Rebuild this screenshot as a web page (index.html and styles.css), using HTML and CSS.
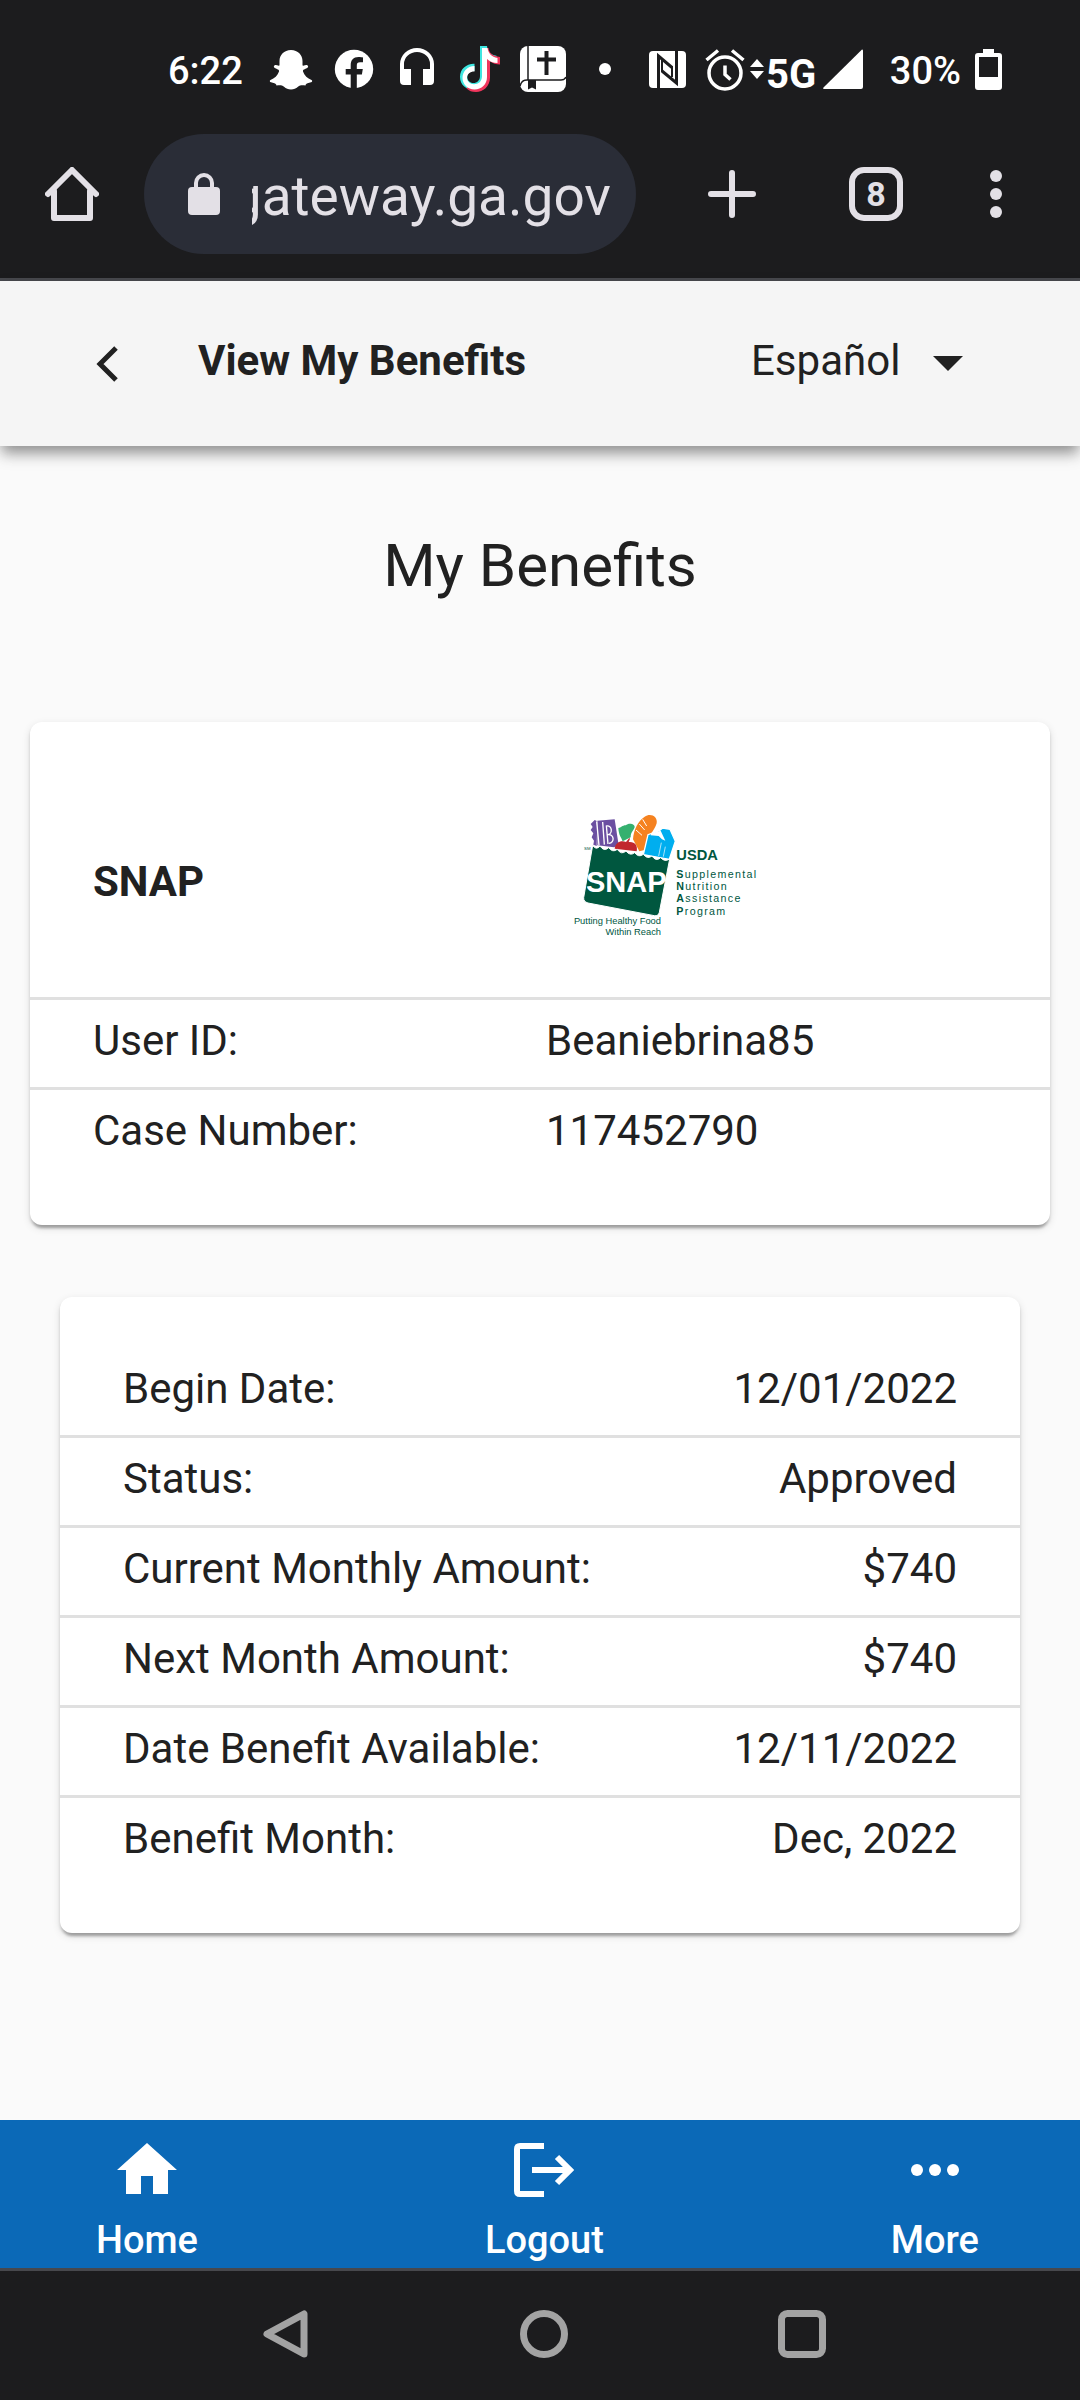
FILE: index.html
```html
<!DOCTYPE html>
<html lang="en">
<head>
  <meta charset="UTF-8">
  <meta name="viewport" content="width=device-width, initial-scale=1.0">
  <title>View My Benefits</title>
  <link rel="stylesheet" href="styles.css">
</head>
<body>

  <!-- status bar -->
  <div class="status">
    <span class="time">6:22</span>
    <div class="notices">
      <svg class="ico" viewBox="0 0 46 46"><path fill="#fff" d="M23 4c7 0 11.500 5 11.500 11v4.500c1.500.6 3-.8 4.700-.3 1.300.5 1.300 2-.2 2.900-2 1.300-4.500 1.500-4 3.500 1.300 4 4.500 7 8.500 8.300 1.200.6.700 1.900-.5 2.400-2.300 1-4.800.6-5.500 3.200-3.300-.4-5.500-.4-7.500 1.200-2.200 1.700-4 2.800-7 2.800s-4.800-1.100-7-2.800c-2-1.600-4.200-1.600-7.500-1.200-.7-2.600-3.200-2.200-5.500-3.200-1.200-.5-1.700-1.800-.5-2.400 4-1.300 7.200-4.300 8.500-8.300.5-2-2-2.200-4-3.500-1.500-.9-1.500-2.400-.2-2.900 1.700-.5 3.200.9 4.700.3V15c0-6 4.500-11 11.500-11z"/></svg>
      <svg class="ico" viewBox="0 0 46 46"><circle cx="23" cy="23" r="19.200" fill="#fff"/><path fill="#1c1c1e" d="M19.700 43V28.500h-5v-5.600h5v-3.500c0-5.300 2.700-8.300 7.800-8.300 2 0 3.500.2 4.500.4v4.800h-3c-2.400 0-3.200 1.200-3.200 3.200v3.400h6l-.9 5.600h-5.100V43z"/></svg>
      <svg class="ico" viewBox="0 0 46 46"><path fill="#fff" d="M6 18a17 16 0 0 1 34 0v17a4 4 0 0 1-4 4h-7V23h7v-5a13 12 0 0 0-26 0v5h7v16h-7a4 4 0 0 1-4-4z"/></svg>
      <svg class="ico" viewBox="0 0 46 46"><path fill="#3ee6e0" d="M23 0h7c.5 5.500 4 9 9.500 9.700v6.800c-3.700 0-6.800-1-9.500-3v17c0 8-6 13.500-13.200 13.500C9 44 3 38.500 3 31c0-8 6.500-13.500 14.500-13.200v7.300C13.500 24.500 10.300 27 10.300 31c0 3.500 2.700 6 6 6 4 0 6.700-2.700 6.700-7z"/><path fill="#f0355c" d="M26 2h5.500c.5 5.500 4.500 8 11.500 9v7.500c-4 0-7-1-10-3v16C33 40.500 26 46 19 46c-4 0-7-1-9.500-3.500L13 38.500c1.500.7 3 1 5 1 4.500 0 8-3.500 8-8z"/><path fill="#fff" d="M25 2h5.500c1 5.500 4 9 10 10v5c-4.500 0-7.500-1.500-10.500-4v18c0 7.500-5.500 12.500-12.500 12.500S5.500 38 5.500 32s4.500-12 12-12v5.500c-4.500 0-7.500 2.500-7.500 6.300 0 3.400 3 6.400 7 6.400 4.500 0 8-3 8-8z"/></svg>
      <svg class="ico" viewBox="0 0 46 46"><rect width="46" height="46" rx="8" fill="#fff"/><g fill="none" stroke="#1c1c1e" stroke-width="1.500"><path d="M8 0v34M0 40c1-4 3-6 7-6h34c3 0 4-1 5-3"/></g><path fill="#1c1c1e" d="M24.500 5h4v6.500H36v4h-7.500V29h-4V15.500H17v-4h7.500zM8 34h8v9.500l-4-2-4 2z"/></svg>
      <svg class="ico" viewBox="0 0 46 46"><circle cx="22" cy="23" r="6" fill="#fff"/></svg>
    </div>
    <svg class="ico nfc" viewBox="0 0 46 46"><rect x="3" y="5" width="37" height="37" rx="4" fill="#fff"/><g fill="none" stroke="#1c1c1e"><path stroke-width="3" d="M12.500 42V10L26 21.500M30.500 5v32L16 25"/><path stroke-width="2" d="M16 26V14M26 20v11"/></g></svg>
    <svg class="ico alarm" viewBox="0 0 46 46"><g fill="none" stroke="#fff" stroke-width="3.500"><circle cx="23" cy="27" r="16"/><path d="M4.500 14 16 4.500M41.500 14 30 4.500M23 19.500v9l5.500 5"/></g></svg>
    <svg class="updown" viewBox="0 0 14 20"><path fill="#fff" d="M7 0l7 8H0zM7 20l7-8H0z"/></svg>
    <span class="network">5G</span>
    <svg class="signal" viewBox="0 0 40 40"><path fill="#fff" d="M39 .5q1 0 1 1V38q0 2-2 2H1q-1.500-.5-.5-1.500z"/></svg>
    <span class="percent">30%</span>
    <svg class="battery" viewBox="0 0 27 41"><path fill="#fff" fill-rule="evenodd" d="M8 0h11v4h5a3 3 0 0 1 3 3v31a3 3 0 0 1-3 3H3a3 3 0 0 1-3-3V7a3 3 0 0 1 3-3h5zM4 8v20h19V8z"/></svg>
  </div>

  <!-- browser bar -->
  <div class="browser">
    <button class="browser-home" aria-label="Home page">
      <svg width="54" height="54" viewBox="0 0 54 54" fill="none" stroke="#e3e0e6" stroke-width="6" stroke-linecap="round" stroke-linejoin="round"><path d="M3 27 27 3l24 24"/><path d="M9 24v27h36V24"/></svg>
    </button>
    <label class="address">
      <svg width="32" height="42" viewBox="0 0 32 42"><rect y="14" width="32" height="28" rx="4" fill="#e3e0e6"/><path fill="none" stroke="#e3e0e6" stroke-width="4" d="M8 16v-6a8 8 0 0 1 16 0v6"/></svg>
      <input type="text" dir="rtl" value="gateway.ga.gov" aria-label="Address">
    </label>
    <button class="browser-btn" aria-label="New tab">
      <svg width="48" height="48" viewBox="0 0 48 48" stroke="#e3e0e6" stroke-width="6" stroke-linecap="round"><path d="M24 3v42M3 24h42"/></svg>
    </button>
    <button class="browser-btn" aria-label="Switch tabs"><span class="tab-count">8</span></button>
    <button class="browser-btn last" aria-label="Menu">
      <svg width="12" height="48" viewBox="0 0 12 48" fill="#e3e0e6"><circle cx="6" cy="6" r="6"/><circle cx="6" cy="24" r="6"/><circle cx="6" cy="42" r="6"/></svg>
    </button>
  </div>

  <!-- app header -->
  <header class="header">
    <button class="back" aria-label="Back">
      <svg width="22" height="36" viewBox="0 0 22 36" fill="none" stroke="#212121" stroke-width="5"><path d="M20 2 4 18l16 16"/></svg>
    </button>
    <h2 class="header-title">View My Benefits</h2>
    <div class="lang">
      <select aria-label="Language">
        <option>Español</option>
      </select>
      <svg width="30" height="15" viewBox="0 0 30 15"><path fill="#212121" d="M0 0h30L15 15z"/></svg>
    </div>
  </header>

  <main class="main">
    <h1>My Benefits</h1>

    <section class="card program">
      <table>
        <tr class="program-head">
          <th scope="row">SNAP</th>
          <td>
            <svg class="logo" viewBox="0 0 630 501" role="img" aria-label="USDA SNAP">
              <path fill="#6b4fa1" d="M92 72l12-12 8 4-2 74-10-4 2-12-7-10 5-12-8-10 6-9z"/>
              <path fill="#6b4fa1" d="M112 62l52-4 12 78-14 6-50-6z"/>
              <path fill="none" stroke="#fff" stroke-width="4" d="M110 64l7 72M128 66l5 68M139 76l5 56M139 78c18-4 20 24 4 26 20-3 22 24 4 26"/>
              <path fill="#35b06f" d="M175 84c8 0 12-8 22-8 8-8 28-6 27 6-4 12-12 14-12 30l-24 12c-4-12-12-18-13-40z"/>
              <path fill="#f58220" d="M219 118c2-30 16-56 35-68 18-12 40 0 36 20-6 22-30 40-36 80l-16 4z"/>
              <path fill="none" stroke="#fff" stroke-width="3" d="M228 90l18 16M238 72l16 18M248 58l12 20"/>
              <path fill="#c1272d" d="M164 146c2-18 18-26 34-20l10-12 2 2-4 10c18-2 28 10 24 28z"/>
              <path fill="#00aeef" stroke="#fff" stroke-width="4" d="M250 164l14-60 34-12 10-8 22 4 16 36-18 54z"/>
              <path fill="#fff" d="M274 100l28-8 14 30-10-4-10-10-24-2z"/>
              <path fill="none" stroke="#fff" stroke-width="2" d="M304 128l-8 40M310 170l6-30"/>
              <path fill="#00573f" stroke="#fff" stroke-width="3" d="M98 136q10 16 22 2 12 18 26 5 12 16 26 5 12 18 26 5 12 16 26 5 12 16 26 5 12 16 26 5 12 18 26 5 12 14 27 4l-31 160q-3 12-15 10L84 309q-14-4-13-16z"/>
              <text class="logo-bag" x="78" y="275">SNAP</text>
              <text class="logo-mark" x="72" y="149">SM</text>
              <text class="logo-usda" x="349" y="180">USDA</text>
              <text class="logo-name" x="349" y="233"><tspan>S</tspan>upplemental</text>
              <text class="logo-name" x="349" y="270"><tspan>N</tspan>utrition</text>
              <text class="logo-name" x="349" y="307"><tspan>A</tspan>ssistance</text>
              <text class="logo-name" x="349" y="345"><tspan>P</tspan>rogram</text>
              <text class="logo-tag" x="303" y="371">Putting Healthy Food</text>
              <text class="logo-tag" x="303" y="404">Within Reach</text>
            </svg>
          </td>
        </tr>
        <tr>
          <th scope="row">User ID:</th>
          <td>Beaniebrina85</td>
        </tr>
        <tr>
          <th scope="row">Case Number:</th>
          <td>117452790</td>
        </tr>
      </table>
    </section>

    <section class="card details">
      <table>
        <tr>
          <th scope="row">Begin Date:</th>
          <td>12/01/2022</td>
        </tr>
        <tr>
          <th scope="row">Status:</th>
          <td>Approved</td>
        </tr>
        <tr>
          <th scope="row">Current Monthly Amount:</th>
          <td>$740</td>
        </tr>
        <tr>
          <th scope="row">Next Month Amount:</th>
          <td>$740</td>
        </tr>
        <tr>
          <th scope="row">Date Benefit Available:</th>
          <td>12/11/2022</td>
        </tr>
        <tr>
          <th scope="row">Benefit Month:</th>
          <td>Dec, 2022</td>
        </tr>
      </table>
    </section>
  </main>

  <nav class="bottom-nav">
    <a href="#home">
      <svg width="60" height="54" viewBox="0 0 60 54"><path fill="#fff" d="M30 0l30 27h-9v24H36V33H24v18H9V27H0z"/></svg>
      Home
    </a>
    <a href="#logout">
      <svg width="60" height="54" viewBox="0 0 60 54" fill="none" stroke="#fff" stroke-width="6"><path d="M30 3H6q-3 0-3 3v42q0 3 3 3h24M18 27h38M43 14l13 13-13 13"/></svg>
      Logout
    </a>
    <a href="#more">
      <svg width="60" height="54" viewBox="0 0 60 54" fill="#fff"><circle cx="12" cy="27" r="6"/><circle cx="30" cy="27" r="6"/><circle cx="48" cy="27" r="6"/></svg>
      More
    </a>
  </nav>

  <!-- phone buttons -->
  <div class="system">
    <button aria-label="Back">
      <svg width="48" height="50" viewBox="0 0 48 50" fill="none" stroke="#a3a3a3" stroke-width="7" stroke-linejoin="round"><path d="M42 5v40L5 25z"/></svg>
    </button>
    <button aria-label="Home">
      <svg width="48" height="48" viewBox="0 0 48 48" fill="none" stroke="#a3a3a3" stroke-width="7"><circle cx="24" cy="24" r="20.500"/></svg>
    </button>
    <button aria-label="Recent apps">
      <svg width="48" height="48" viewBox="0 0 48 48" fill="none" stroke="#a3a3a3" stroke-width="7"><rect x="3.500" y="3.500" width="41" height="41" rx="6"/></svg>
    </button>
  </div>

</body>
</html>
```
FILE: styles.css
```css
* {
  margin: 0;
  padding: 0;
  box-sizing: border-box;
}

body {
  min-height: 100vh;
  display: flex;
  flex-direction: column;
  font-family: Roboto, "Liberation Sans", sans-serif;
  font-size: 42px;
  color: #212121;
  background-color: #fafafa;
}

button, input, select {
  border: none;
  background: none;
  font: inherit;
  color: inherit;
  outline: none;
}

svg {
  display: block;
  flex: none;
}

/* status bar */
.status {
  height: 134px;
  padding: 4px 78px 0 168px;
  display: flex;
  align-items: center;
  font-size: 38px;
  font-weight: 500;
  color: #fff;
  background-color: #1c1c1e;
}

.time,
.percent {
  padding-top: 3px;
}

.time {
  width: 100px;
}

.notices {
  display: flex;
  gap: 17px;
}

.ico {
  width: 46px;
  height: 46px;
}

.nfc {
  margin-left: 17px;
}

.alarm {
  margin-left: 10px;
}

.updown {
  width: 14px;
  height: 20px;
  margin-left: 2px;
}

.network {
  margin: 12px 7px 0 2px;
  font-size: 40px;
  font-weight: 700;
  line-height: 44px;
}

.signal {
  width: 40px;
  height: 40px;
}

.percent {
  margin-left: auto;
}

.battery {
  width: 27px;
  height: 41px;
  margin-left: 14px;
}

/* browser bar */
.browser {
  padding: 0 36px 24px 45px;
  display: flex;
  align-items: center;
  color: #e3e0e6;
  background-color: #1c1c1e;
  border-bottom: 3px solid #47484d;
}

.address {
  flex: 1;
  min-width: 0;
  height: 120px;
  margin: 0 24px 0 45px;
  padding: 0 25px 0 44px;
  display: flex;
  align-items: center;
  gap: 32px;
  border-radius: 60px;
  background-color: #2a2d37;
}

.address input {
  flex: 1;
  min-width: 0;
  height: 84px;
  padding-top: 4px;
  font-size: 55px;
}

.browser-btn {
  width: 144px;
  height: 120px;
  display: flex;
  justify-content: center;
  align-items: center;
}

.browser-btn.last {
  width: 96px;
}

.tab-count {
  width: 54px;
  height: 54px;
  border: 6px solid #e3e0e6;
  border-radius: 15px;
  font-size: 34px;
  font-weight: 700;
  line-height: 42px;
}

/* app header */
.header {
  height: 165px;
  padding: 0 117px 0 96px;
  display: flex;
  align-items: center;
  background-color: #f5f5f5;
  box-shadow: 0 9px 12px -3px rgba(0, 0, 0, 0.28), 0 8px 16px rgba(0, 0, 0, 0.2);
}

.header-title {
  margin-left: 80px;
  padding-bottom: 6px;
  font-size: 42px;
  font-weight: 700;
}

.lang {
  margin-left: auto;
  display: flex;
  align-items: center;
  gap: 32px;
}

.lang select {
  padding-bottom: 6px;
  appearance: none;
}

/* content */
.main {
  flex: 1;
  padding: 84px 30px 72px;
}

h1 {
  margin-bottom: 120px;
  font-size: 60px;
  font-weight: 400;
  line-height: 72px;
  text-align: center;
}

.card {
  padding: 48px 0;
  border-radius: 12px;
  background-color: #fff;
  box-shadow: 0 6px 3px -3px rgba(0, 0, 0, 0.2), 0 3px 3px rgba(0, 0, 0, 0.14), 0 3px 9px rgba(0, 0, 0, 0.12);
}

.card table {
  width: 100%;
  border-spacing: 0;
}

.card th,
.card td {
  padding: 11px 63px 16px;
  border-bottom: 3px solid #e0e0e0;
  font-weight: 400;
  line-height: 60px;
  text-align: left;
}

.card tr:last-child th,
.card tr:last-child td {
  border-bottom: none;
}

.program th {
  width: 50%;
}

.program td {
  padding-left: 6px;
}

.program .program-head th {
  padding: 0 63px 4px;
  font-weight: 700;
}

.program .program-head td {
  padding: 30px 0 30px 20px;
}

.details {
  margin: 72px 30px 0;
  padding-top: 51px;
}

.details td {
  text-align: right;
}

/* logo */
.logo {
  width: 210px;
  height: 167px;
  font-family: "Liberation Sans", sans-serif;
  fill: #00573f;
}

.logo-bag {
  font-size: 87px;
  font-weight: 700;
  fill: #fff;
}

.logo-mark {
  font-size: 13px;
}

.logo-usda {
  font-size: 44px;
  font-weight: 700;
}

.logo-name {
  font-size: 32px;
  letter-spacing: 4px;
}

.logo-name tspan {
  font-weight: 700;
}

.logo-tag {
  font-size: 28px;
  text-anchor: end;
}

/* bottom navigation */
.bottom-nav {
  height: 148px;
  padding: 23px 101px 0 96px;
  display: flex;
  justify-content: space-between;
  background-color: #0b69b7;
}

.bottom-nav a {
  display: flex;
  flex-direction: column;
  align-items: center;
  gap: 21px;
  font-size: 38px;
  font-weight: 500;
  line-height: 44px;
  color: #fff;
  text-decoration: none;
}

/* phone buttons */
.system {
  height: 132px;
  padding: 0 0 3px 8px;
  display: flex;
  justify-content: center;
  align-items: center;
  gap: 210px;
  background-color: #1c1c1e;
  border-top: 3px solid #47484d;
}
```
